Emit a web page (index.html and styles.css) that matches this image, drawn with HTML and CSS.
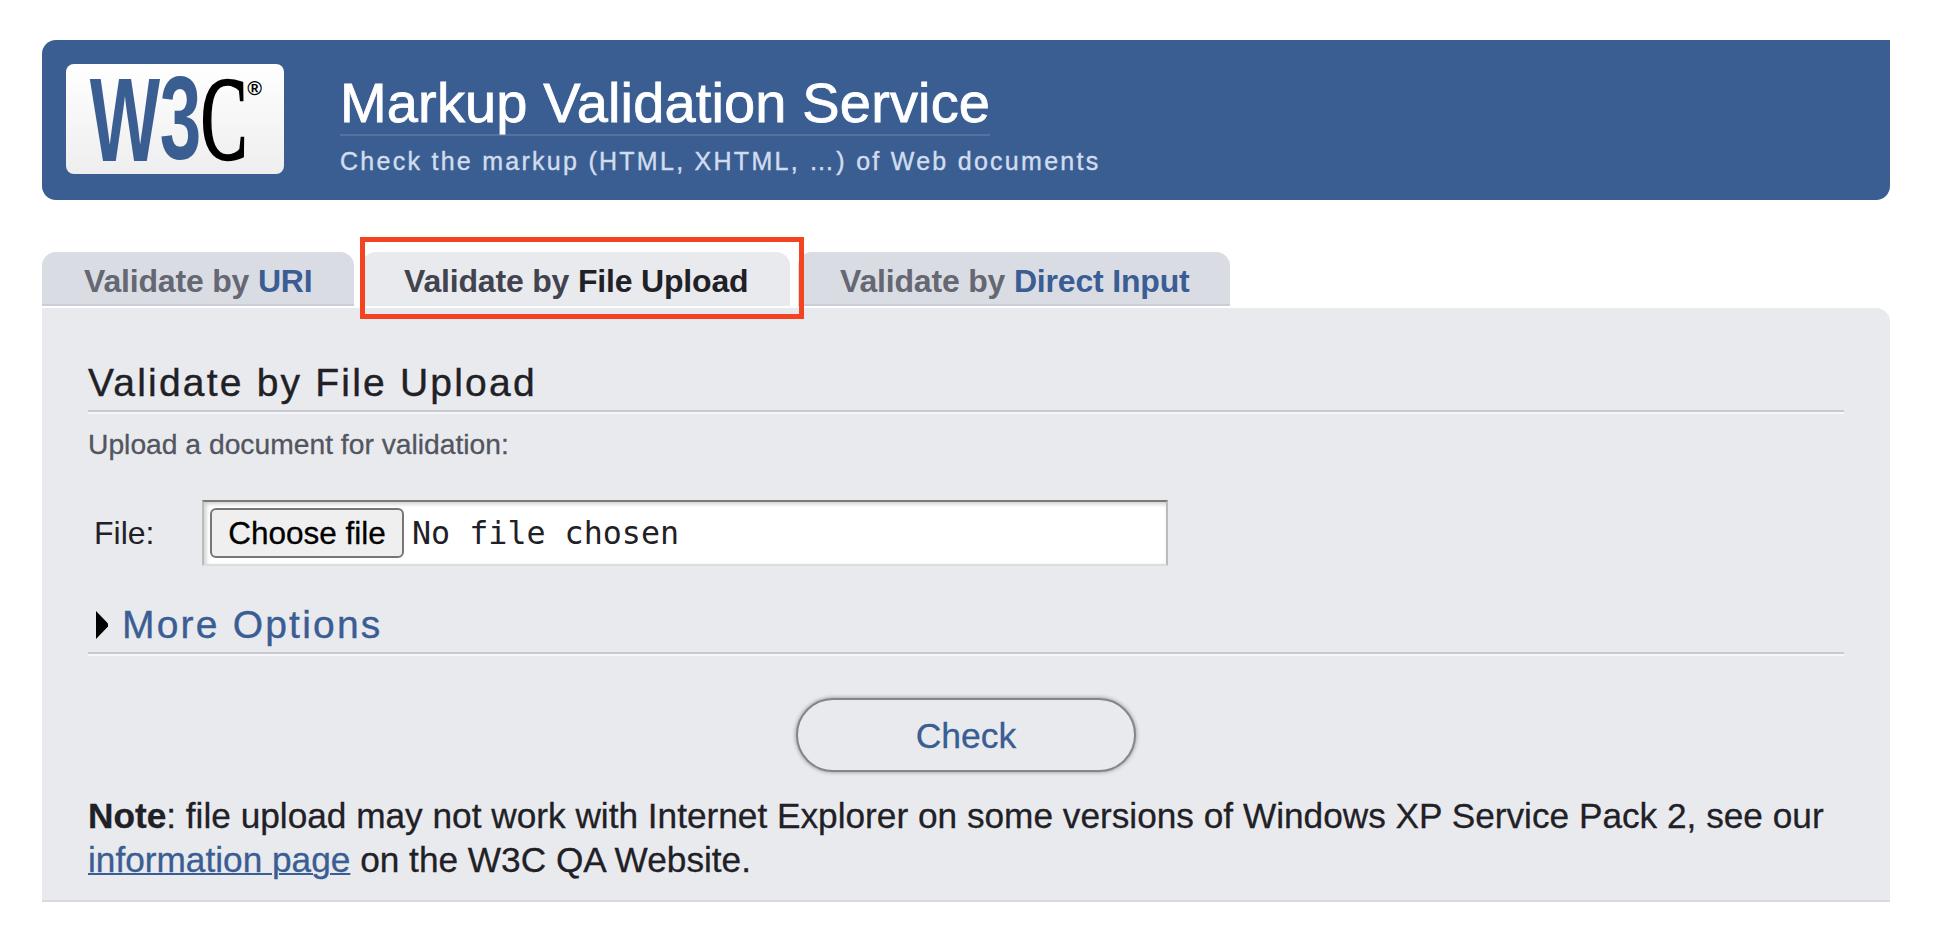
FILE: index.html
```
<!DOCTYPE html>
<html lang="en">
<head>
<meta charset="utf-8">
<title>Markup Validation Service</title>
<link rel="stylesheet" href="styles.css">
</head>
<body>
<header class="banner">
  <svg class="logo" viewBox="108 102 654 330" role="img" aria-label="W3C">
    <text class="logo-w" transform="translate(179 392) scale(.63 1)">W</text>
    <text class="logo-w" transform="translate(389 388) scale(.63 1)">3</text>
    <text class="logo-c" transform="translate(512 388) scale(.59 1)">C</text>
    <text class="logo-r" x="652" y="195">®</text>
  </svg>
  <div class="titles">
    <h1 class="title">Markup Validation Service</h1>
    <p class="tagline">Check the markup (HTML, XHTML, …) of Web documents</p>
  </div>
</header>
<nav class="tabs">
  <a class="tab tab-uri">Validate by <span class="kind">URI</span></a>
  <a class="tab tab-file active">Validate by <span class="kind">File Upload</span></a>
  <a class="tab tab-direct">Validate by <span class="kind">Direct Input</span></a>
  <span class="highlight"></span>
</nav>
<main class="panel">
  <h2 class="heading">Validate by File Upload</h2>
  <p class="instruction">Upload a document for validation:</p>
  <div class="file-row">
    <label class="file-label">File:</label>
    <div class="file-input"><button class="choose">Choose file</button><span class="filename">No file chosen</span></div>
  </div>
  <h2 class="heading options"><svg class="arrow" viewBox="0 0 12 28"><path d="M0 0 12 12.500V15.500L0 28Z"/></svg><span>More Options</span></h2>
  <button class="check">Check</button>
  <p class="note"><strong>Note</strong>: file upload may not work with Internet Explorer on some versions of Windows XP Service Pack 2, see our<br><a class="link" href="#">information page</a> on the W3C QA Website.</p>
</main>
</body>
</html>
```
FILE: styles.css
```
* { box-sizing: border-box; }
body { margin: 0; padding: 40px 44px 0 42px; background: #fff; color: #1f2126; font-family: "Liberation Sans", Arial, sans-serif; }
h1, h2, p { margin: 0; font-weight: 400; white-space: nowrap; }
button { font-family: inherit; padding: 0; }
.banner { display: flex; height: 160px; padding: 24px; background: #3b5e92; border-radius: 14px 0 14px 14px; }
.logo { width: 218px; height: 110px; border-radius: 8px; overflow: visible; background: linear-gradient(#fff, #eee); }
.logo-w { font: bold 355px "Liberation Sans", sans-serif; fill: #3b5e92; }
.logo-c { font: 355px "Liberation Serif", serif; fill: #000; stroke: #000; stroke-width: 7px; }
.logo-r { font: bold 60px "Liberation Sans", sans-serif; fill: #000; }
.titles { display: flex; flex-direction: column; align-items: flex-start; margin-left: 56px; }
.title { height: 72px; line-height: 78px; border-bottom: 2px solid #53739f; color: #fff; font-size: 56px; letter-spacing: .15px; -webkit-text-stroke: .8px #fff; }
.tagline { height: 50px; line-height: 50px; color: #d0ddef; font-size: 25px; letter-spacing: 2.27px; -webkit-text-stroke: .4px #d0ddef; }
.tabs { position: relative; display: flex; height: 54px; margin-top: 52px; }
.tab { height: 54px; padding-left: 42px; line-height: 58px; border-bottom: 2px solid #cbcdda; border-radius: 14px 14px 0 0; background: #dadce4; color: #656772; font-size: 32px; font-weight: 700; letter-spacing: -.18px; white-space: nowrap; }
.tab-uri { width: 312px; }
.tab-file { width: 428px; margin-left: 8px; }
.tab-direct { width: 432px; margin-left: 8px; }
.kind { color: #3a5d94; }
.active { background: #e9eaee; border-color: #e9eaee; color: #41434f; }
.active .kind { color: #1f2126; }
.highlight { position: absolute; left: 318px; top: -15px; width: 444px; height: 82px; border: 5px solid #f54322; }
.panel { display: flex; flex-direction: column; height: 594px; margin-top: 2px; padding: 46px 46px 0; background: #e9eaee; border-bottom: 2px solid #d9dadf; border-top-right-radius: 14px; }
.heading { display: flex; align-items: center; height: 58px; padding-top: 2px; border-bottom: 2px solid #c8cad3; box-shadow: 0 2px #f7f7f9; font-size: 39px; line-height: 56px; letter-spacing: 2.2px; -webkit-text-stroke: .4px; }
.instruction { height: 64px; line-height: 65px; color: #53555f; font-size: 28.25px; -webkit-text-stroke: .3px; }
.file-row { display: flex; align-items: center; height: 66px; margin-top: 24px; padding-left: 6px; }
.file-label { width: 108px; font-size: 32px; }
.file-input { display: flex; align-items: center; width: 966px; height: 66px; padding-left: 6px; border: 2px solid; border-color: #777a77 #bbb #ddd #bbb; background: #fff; box-shadow: inset 2px 2px 4px #ccc; }
.choose { width: 194px; height: 50px; border: 2px solid #767676; border-radius: 6px; background: #efefef; color: #000; font-size: 31.5px; -webkit-text-stroke: .3px; }
.filename { margin-left: 8px; font: 31.7px "DejaVu Sans Mono", monospace; }
.options { margin-top: 30px; padding-left: 8px; color: #3a5d94; }
.arrow { width: 12px; height: 28px; margin-right: 14px; }
.check { align-self: center; width: 340px; height: 74px; margin-top: 44px; padding-top: 2px; border: 2px solid #858688; border-radius: 37px; background: #e9eaee; box-shadow: 0 0 4px #888; color: #3a5d94; font-size: 35.5px; -webkit-text-stroke: .3px; }
.note { margin-top: 22px; font-size: 35.23px; line-height: 44px; -webkit-text-stroke: .3px; }
.link { color: #3a5d94; text-decoration-thickness: 2px; }
```
